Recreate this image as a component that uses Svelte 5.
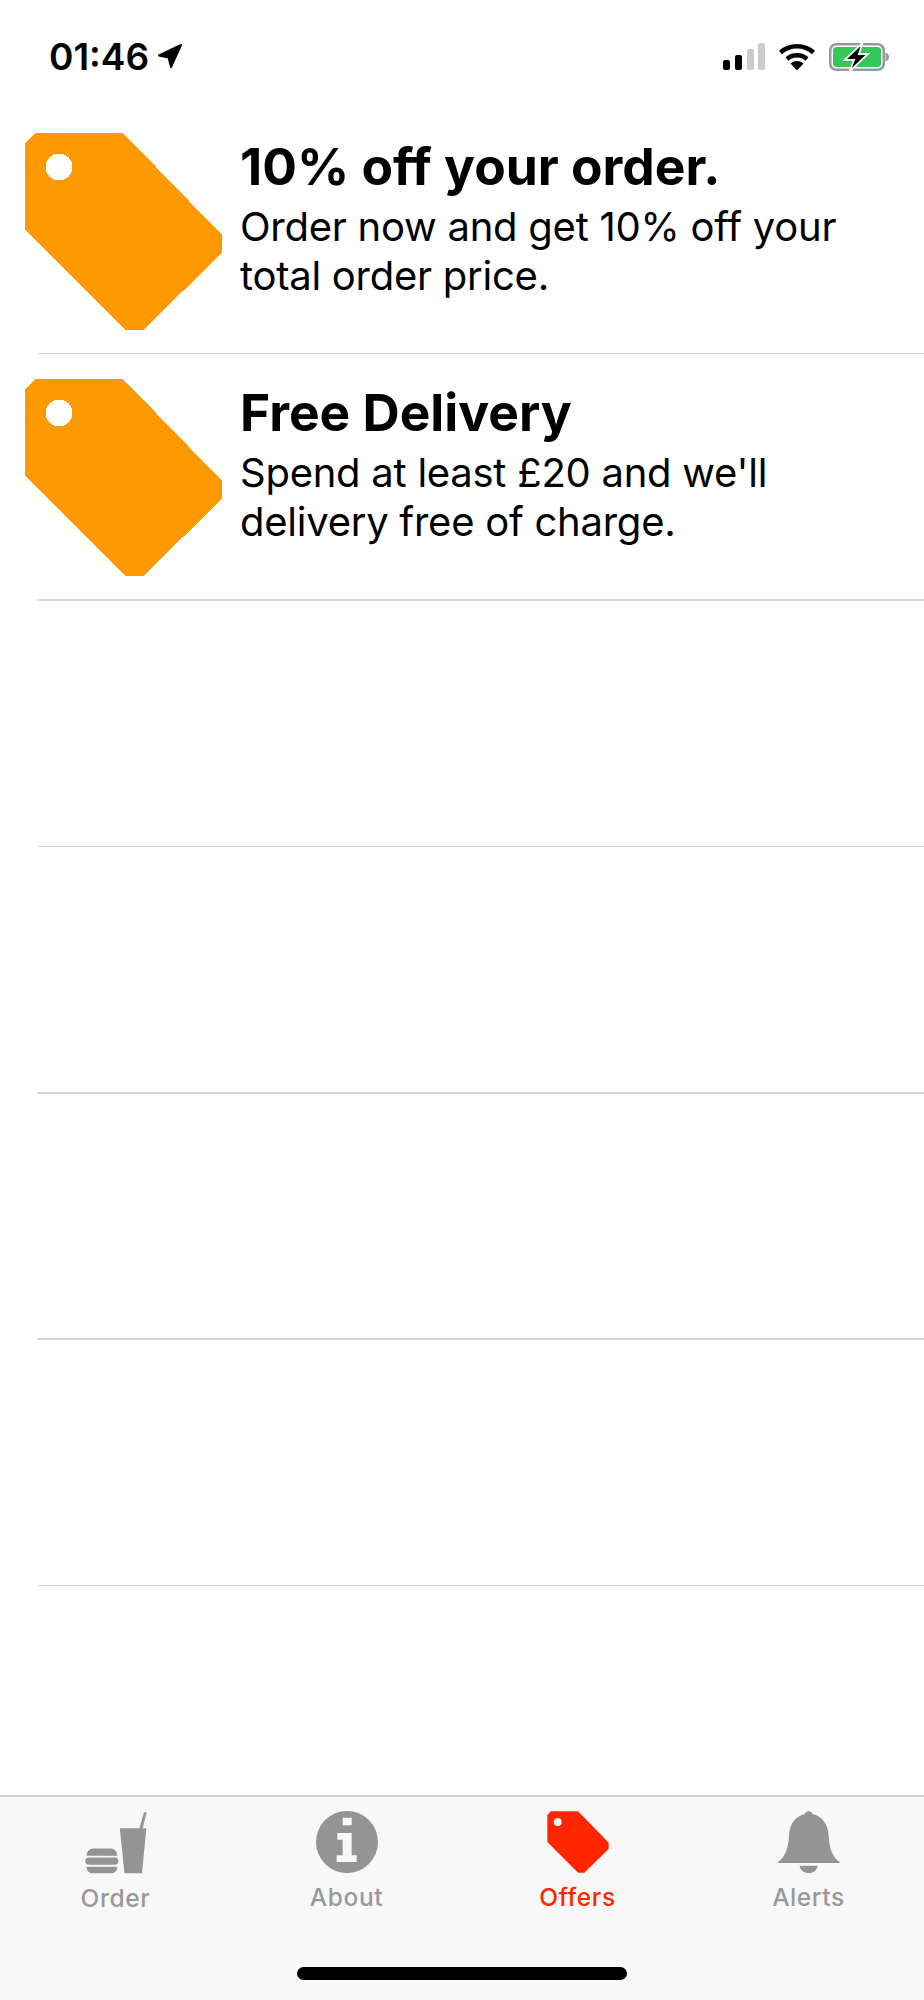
<script>
  const offers = [
    { title: '10% off your order.', text: 'Order now and get 10% off your total order price.' },
    { title: 'Free Delivery', text: "Spend at least £20 and we'll delivery free of charge." },
    null, null, null, null
  ];
  const tag = 'M10 0H98L197 102V120L118 197H100L0 97V10Z';
</script>

<div class="page">
  <header class="status">
    <div class="time-wrap">
      <span class="time">01:46</span>
      <svg class="loc" viewBox="0 0 26 26" width="26" height="26"><path d="M2 12.500 24 2 14 24 11.500 14.500Z" fill="#000" stroke="#000" stroke-width="2" stroke-linejoin="round"/></svg>
    </div>
    <div class="indicators">
      <svg class="signal" viewBox="0 0 42 28" width="42" height="28">
        <rect x="0" y="17" width="7" height="10" rx="2" fill="#000"/>
        <rect x="12" y="12" width="7" height="15" rx="2" fill="#000"/>
        <rect x="24" y="6" width="7" height="21" rx="2" fill="#ccc"/>
        <rect x="35" y="0" width="7" height="27" rx="2" fill="#ccc"/>
      </svg>
      <svg class="wifi" viewBox="0 0 38 28" width="38" height="28">
        <path d="M2.500 9.500C11.500 1.200 26.500 1.200 35.500 9.500" fill="none" stroke="#000" stroke-width="4.500"/>
        <path d="M9 16C14.500 11 23.500 11 29 16" fill="none" stroke="#000" stroke-width="4.500"/>
        <path d="M12.500 20.500C16.500 17.200 21.500 17.200 25.500 20.500L19 27.500Z" fill="#000"/>
      </svg>
      <svg class="battery" viewBox="0 0 61 30" width="61" height="30">
        <rect x="1.250" y="1.250" width="53.500" height="25.500" rx="6" fill="#fff" stroke="#999" stroke-width="2.500"/>
        <rect x="4" y="4" width="48" height="20" rx="3.500" fill="#34c759"/>
        <path d="M56.500 9.500c2.500.5 3.500 2.500 3.500 4.500s-1 4-3.500 4.500z" fill="#999"/>
        <path d="M33.500 0 15.500 17H25L20.500 28.500 39 11H30Z" fill="#000" stroke="#fff" stroke-width="1.800" stroke-linejoin="miter"/>
      </svg>
    </div>
  </header>

  <main class="list">
    {#each offers as offer}
      <div class="row">
        {#if offer}
          <div class="offer">
            <svg class="tag" viewBox="0 0 197 197" width="197" height="197" shape-rendering="crispEdges">
              <path d={tag} fill="#ff9900"/>
              <circle cx="34" cy="34" r="13.500" fill="#fff"/>
            </svg>
            <div class="copy">
              <h2>{offer.title}</h2>
              <p>{offer.text}</p>
            </div>
          </div>
        {/if}
        <div class="sep"></div>
      </div>
    {/each}
  </main>

  <footer class="tabs">
    <nav class="tabrow">
      <div class="tab">
        <svg viewBox="250 90 190 190" width="63" height="63" fill="#949494">
          <path d="M358 142H438L425 278H372Z"/>
          <path d="M417 142 431 94H439L427 142Z"/>
          <path d="M258 225C258 208 270 203 282 203H326C338 203 350 208 350 225Z"/>
          <rect x="254" y="230" width="100" height="22" rx="11"/>
          <path d="M258 258H350C350 272 342 278 330 278H278C266 278 258 272 258 258Z"/>
        </svg>
        <span>Order</span>
      </div>
      <div class="tab">
        <svg viewBox="948 92 186 186" width="62" height="62">
          <circle cx="1041" cy="185" r="93" fill="#949494"/>
          <path d="M1028 112H1055V135H1028ZM1012 158H1055V225H1070V245H1010V225H1028V178H1012Z" fill="#f8f8f8"/>
        </svg>
        <span>About</span>
      </div>
      <div class="tab active">
        <svg viewBox="0 0 197 197" width="62" height="62">
          <path d={tag} fill="#ff2600" stroke="#ff2600" stroke-width="6" stroke-linejoin="round" transform="translate(4 4) scale(.96)"/>
          <circle cx="34" cy="35" r="12.500" fill="#f8f8f8"/>
        </svg>
        <span>Offers</span>
      </div>
      <div class="tab">
        <svg viewBox="945 92 186 186" width="62" height="62" fill="#949494">
          <path d="M1037 93C1044 93 1047 97 1048 101C1078 108 1095 130 1097 165C1099 205 1108 230 1130 245V248H945V245C967 230 976 205 978 165C980 130 997 108 1026 101C1027 97 1030 93 1037 93Z"/>
          <path d="M1010 256H1064C1063 270 1050 278 1037 278C1024 278 1011 270 1010 256Z"/>
        </svg>
        <span>Alerts</span>
      </div>
    </nav>
    <div class="home"></div>
  </footer>
</div>

<style>
  :global(body) {
    margin: 0;
    background: #fff;
  }
  .page {
    width: 924px;
    height: 2000px;
    display: flex;
    flex-direction: column;
    font-family: Inter, "Liberation Sans", sans-serif;
    color: #000;
    overflow: hidden;
  }
  .status {
    height: 108px;
    flex: none;
    display: flex;
    justify-content: space-between;
    box-sizing: border-box;
    padding: 36px 34px 0 49px;
  }
  .time-wrap {
    display: flex;
    align-items: flex-start;
    gap: 8px;
  }
  .time {
    font-size: 37px;
    font-weight: 600;
    line-height: 42px;
  }
  .loc {
    margin-top: 7px;
  }
  .indicators {
    display: flex;
    align-items: flex-start;
    padding-top: 7px;
  }
  .signal {
    margin-right: 13px;
  }
  .wifi {
    margin-right: 13px;
  }
  .list {
    flex: 1;
    display: flex;
    flex-direction: column;
  }
  .row {
    height: 246.4px;
    flex: none;
    display: flex;
    flex-direction: column;
    justify-content: flex-end;
  }
  .offer {
    flex: 1;
    display: flex;
    gap: 18px;
    box-sizing: border-box;
    padding: 25px 40px 0 25px;
  }
  .tag {
    flex: none;
  }
  .copy {
    padding-top: 7px;
  }
  h2 {
    margin: 0;
    font-size: 51.500px;
    font-weight: 700;
    line-height: 53px;
  }
  p {
    margin: 9px 0 0;
    font-size: 40px;
    font-weight: 400;
    line-height: 49px;
    letter-spacing: -0.25px;
  }
  .sep {
    height: 1.5px;
    margin-left: 37px;
    background: #d8d8d8;
  }
  .tabs {
    margin-top: auto;
    height: 205px;
    flex: none;
    box-sizing: border-box;
    background: #f8f8f8;
    border-top: 2px solid #d0d0d0;
    display: flex;
    flex-direction: column;
  }
  .tabrow {
    display: grid;
    grid-template-columns: repeat(4, 231px);
    padding-top: 14px;
  }
  .tab {
    display: flex;
    flex-direction: column;
    align-items: center;
    color: #999;
  }
  .tab span {
    font-size: 24.500px;
    font-weight: 450;
    line-height: 30px;
    margin-top: 9px;
    letter-spacing: 0.6px;
  }
  .tab.active {
    color: #ff2600;
  }
  .home {
    width: 330px;
    height: 13px;
    border-radius: 7px;
    background: #000;
    margin: auto auto 20px;
  }
</style>
